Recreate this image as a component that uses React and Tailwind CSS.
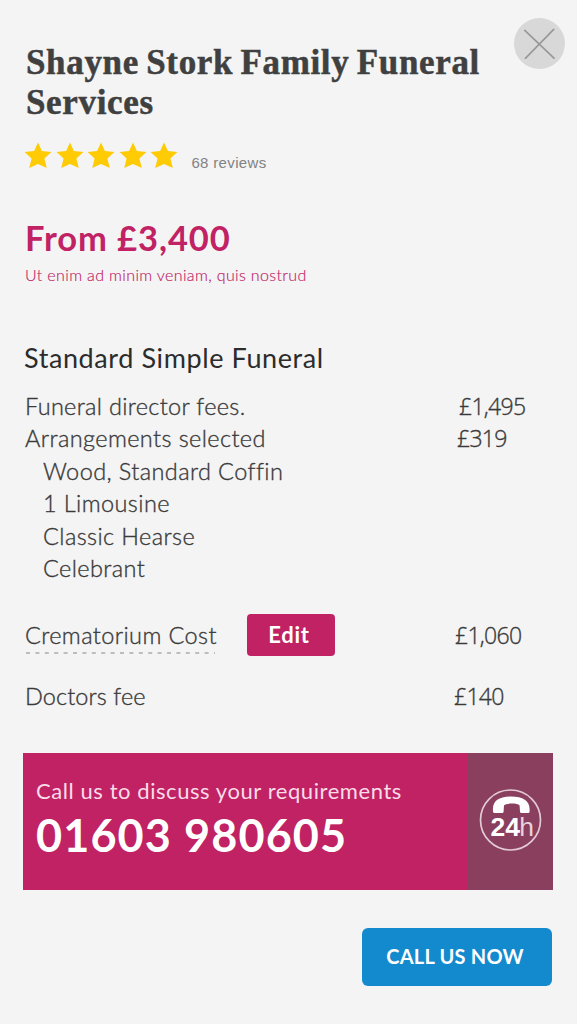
import React from 'react';

const arrangements = ['Wood, Standard Coffin', '1 Limousine', 'Classic Hearse', 'Celebrant'];

const Star = () => (
  <svg width="28" height="27" viewBox="0 0 28 27" fill="#ffcb05">
    <path d="M14 0.5 L17.9 9 L27.4 10 L20.4 16.6 L22.8 26 L14 21.9 L5.2 26 L7.6 16.6 L0.6 10 L10.1 9 Z" />
  </svg>
);

const PhoneBadge = () => (
  <svg width="64" height="64" viewBox="0 0 64 64" fill="none">
    <circle cx="31.5" cy="31" r="30" stroke="#e2cbd5" strokeWidth="1.7" />
    <path
      d="M14 22.4 C13 12.2 19.4 7.6 32 7.6 C44.6 7.6 51.4 12.2 50.6 22.4 Q50.5 24 49.2 24 H42.4 Q41 24 41 22.4 L40.6 16.4 C38.5 14 27 14 25 16.4 L24.6 22.4 Q24.6 24 23.2 24 H15.4 Q14.1 24 14 22.4 Z"
      fill="#fff"
    />
    <text x="11.5" y="47" fill="#fff" fontFamily="Liberation Sans, sans-serif" fontSize="26.5" fontWeight="700" textLength="29.5" lengthAdjust="spacingAndGlyphs">24</text>
    <text x="40.2" y="47" fill="#e6d3db" fontFamily="Liberation Sans, sans-serif" fontSize="26.5">h</text>
  </svg>
);

const Price = ({ className, children }) => (
  <span className={`shrink-0 font-['Open_Sans',sans-serif] text-[23px] font-light tracking-[-0.7px] ${className}`}>
    {children}
  </span>
);

const App = () => {
  return (
    <main className="h-[1024px] w-[577px] overflow-hidden bg-[#f4f4f4] font-[Lato,sans-serif] text-[#3a3a3a]">
      {/* HEADER */}
      <header className="flex h-[122px] items-start justify-between pl-[26px] pr-3">
        <h1 className="mt-[43px] whitespace-nowrap font-['Liberation_Serif',serif] text-[35px] font-bold leading-[40px] tracking-[0.65px] [word-spacing:-2px] text-[#404040] [-webkit-text-stroke:0.5px_#404040]">
          Shayne Stork Family Funeral
          <br />
          Services
        </h1>
        <button aria-label="Close" className="mt-[18px] flex size-[51px] shrink-0 items-center justify-center rounded-full bg-[#d8d8d8]">
          <svg width="31" height="31" viewBox="0 0 31 31" stroke="#979797" strokeWidth="1.6" strokeLinecap="round">
            <path d="M0.8 2.4 L30 30.2 M29.7 1.4 L1.4 30.4" />
          </svg>
        </button>
      </header>

      {/* RATING */}
      <div className="flex h-[50px] items-start pl-6 pt-5">
        <div className="flex gap-[3.6px]">
          {[1, 2, 3, 4, 5].map((n) => (
            <Star key={n} />
          ))}
        </div>
        <span className="ml-[13px] mt-[11px] font-['Liberation_Sans',sans-serif] text-[15px] leading-5 tracking-[0.35px] text-[#828282]">
          68 reviews
        </span>
      </div>

      {/* HEADLINE PRICE */}
      <section className="h-[162px] pl-[25px] pt-[45px] text-[#c02264]">
        <p className="text-[34.5px] font-bold leading-[42px] tracking-[0.9px]">From £3,400</p>
        <p className="mt-[5px] text-[16px] font-light leading-[22px] tracking-[0.36px] [-webkit-text-stroke:0.15px_#c02264]">
          Ut enim ad minim veniam, quis nostrud
        </p>
      </section>

      {/* COSTS */}
      <section className="pl-[25px] text-[23.5px] font-light leading-[32.4px] tracking-[0.4px] [-webkit-text-stroke:0.35px_#3a3a3a]">
        <h2 className="-ml-px mt-[7px] text-[27px] font-normal leading-[34px] tracking-[0.6px] text-[#2c2c2c] [-webkit-text-stroke:0px]">
          Standard Simple Funeral
        </h2>
        <div className="mt-[15px] flex">
          <span className="w-[434px] tracking-[0.32px]">Funeral director fees.</span>
          <Price>£1,495</Price>
        </div>
        <div className="flex">
          <span className="w-[432px]">Arrangements selected</span>
          <Price>£319</Price>
        </div>
        <ul className="pl-[18px]">
          {arrangements.map((item) => (
            <li key={item}>{item}</li>
          ))}
        </ul>
        <div className="mt-[30px] flex h-[42px] items-center">
          <div className="w-[222px]">
            <span className="relative">
              Crematorium Cost
              <svg className="absolute -bottom-[5px] left-0" width="192" height="2" stroke="#bdbdbd" strokeWidth="2" strokeDasharray="4 5.4">
                <path d="M1 1 H190" fill="none" />
              </svg>
            </span>
          </div>
          <button className="h-[42px] w-[88px] rounded-[4px] bg-[#c02264] pr-1 text-[22px] font-bold tracking-[0.7px] text-white [-webkit-text-stroke:0px]">
            Edit
          </button>
          <Price className="ml-[120px]">£1,060</Price>
        </div>
        <div className="mt-[24px] flex">
          <span className="w-[429px] tracking-[0.1px]">Doctors fee</span>
          <Price>£140</Price>
        </div>
      </section>

      {/* CALL BANNER */}
      <section className="ml-[23px] mt-[40px] flex h-[137px] w-[530px] bg-[#c02264] text-white">
        <div className="w-[445px] pl-[13px] pt-[24px]">
          <p className="text-[22px] leading-[28px] tracking-[0.57px] text-[#f9dce8]">Call us to discuss your requirements</p>
          <p className="mt-[3px] text-[45px] font-bold leading-[54px] tracking-[1.1px]">01603 980605</p>
        </div>
        <div className="flex w-[85px] items-center justify-center bg-[#8a3f5f]">
          <PhoneBadge />
        </div>
      </section>

      <button className="ml-[362px] mt-[38px] h-[58px] w-[190px] rounded-[6px] bg-[#138acd] pb-0.5 pr-1 text-[20px] font-bold tracking-[0.2px] text-white">
        CALL US NOW
      </button>
    </main>
  );
};

export default App;
